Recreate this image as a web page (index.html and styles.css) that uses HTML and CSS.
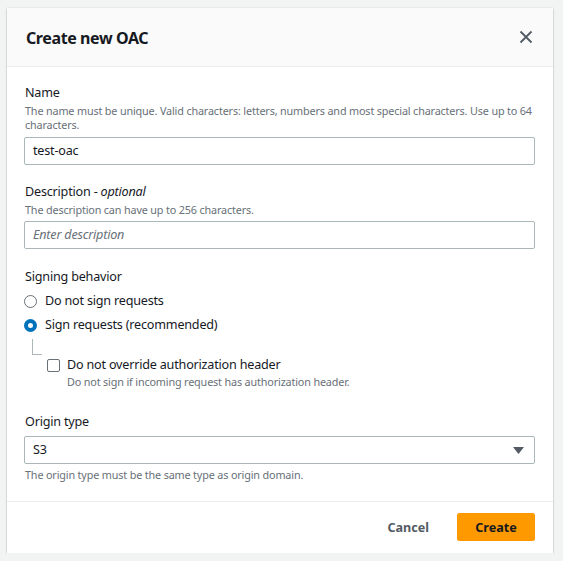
FILE: index.html
```html
<!DOCTYPE html>
<html>
<head>
<meta charset="utf-8">
<link rel="stylesheet" href="styles.css">
</head>
<body>
<div class="modal">
  <div class="header">
    <h2 class="title">Create new OAC</h2>
    <svg class="close" width="14" height="14" viewBox="0 0 14 14"><path d="M1.5 1.5 L12.5 12.5 M12.5 1.5 L1.5 12.5" stroke="#545b64" stroke-width="1.8" fill="none"/></svg>
  </div>
  <div class="content">
    <div class="field">
      <div class="label">Name</div>
      <div class="desc">The name must be unique. Valid characters: letters, numbers and most special characters. Use up to 64 characters.</div>
      <div class="input">test-oac</div>
    </div>
    <div class="field f2">
      <div class="label">Description - <i>optional</i></div>
      <div class="desc">The description can have up to 256 characters.</div>
      <div class="input placeholder">Enter description</div>
    </div>
    <div class="field f3">
      <div class="label">Signing behavior</div>
      <div class="radio-row first"><span class="radio"></span><span>Do not sign requests</span></div>
      <div class="radio-row"><span class="radio checked"></span><span>Sign requests (recommended)</span></div>
      <div class="tree"></div>
      <div class="check-row"><span class="checkbox"></span><span>Do not override authorization header</span></div>
      <div class="desc check-desc">Do not sign if incoming request has authorization header.</div>
    </div>
    <div class="field f4">
      <div class="label">Origin type</div>
      <div class="input select"><span>S3</span><svg width="11" height="7" viewBox="0 0 11 7"><path d="M0 0 H11 L5.5 7 Z" fill="#545b64"/></svg></div>
      <div class="desc after">The origin type must be the same type as origin domain.</div>
    </div>
  </div>
  <div class="footer">
    <button class="btn cancel">Cancel</button>
    <button class="btn primary">Create</button>
  </div>
</div>
</body>
</html>
```
FILE: styles.css
```css
html, body {
  margin: 0;
  padding: 0;
  background: #f2f3f3;
  font-family: "Noto Sans", "Liberation Sans", sans-serif;
  color: #16191f;
}
.modal {
  margin: 8px 0 0 7px;
  width: 546px;
  background: #ffffff;
  box-shadow: 0 1px 2px rgba(0,0,0,0.25), 0 0 1px rgba(0,0,0,0.15);
}
.header {
  height: 58px;
  background: #fafafa;
  border-bottom: 1px solid #eaeded;
  display: flex;
  align-items: center;
  justify-content: space-between;
  padding: 0 20px 0 19px;
}
.title {
  margin: 0;
  font-size: 16px;
  font-weight: 700;
  line-height: 20px;
  padding-top: 2px;
  letter-spacing: -0.4px;
}
.close {
  display: block;
}
.content {
  padding: 16px 18px 19px 17px;
}
.label {
  font-size: 12.6px;
  line-height: 20px;
  padding-left: 1px;
  letter-spacing: -0.2px;
}
.label i {
  font-style: italic;
}
.desc {
  font-size: 10.8px;
  line-height: 14px;
  color: #687078;
  margin-top: 1px;
  padding-left: 1px;
  letter-spacing: -0.15px;
}
.input {
  margin-top: 5px;
  height: 26px;
  border: 1px solid #aab7b8;
  border-radius: 2px;
  font-size: 12.6px;
  line-height: 26px;
  padding: 0 8px;
  letter-spacing: -0.2px;
}
.placeholder {
  color: #687078;
  font-style: italic;
}
.f2 {
  margin-top: 17px;
}
.f2 .input {
  margin-top: 4px;
}
.f3 {
  margin-top: 18px;
}
.radio-row, .check-row {
  display: flex;
  align-items: center;
  font-size: 12.6px;
  line-height: 20px;
  margin-top: 4px;
  letter-spacing: -0.2px;
}
.radio {
  box-sizing: border-box;
  width: 13px;
  height: 13px;
  border-radius: 50%;
  border: 1px solid #687078;
  margin: 0 8px 0 0;
  flex: none;
}
.radio.checked {
  border: 4px solid #0073bb;
  background: #fff;
}
.tree {
  margin: 4px 0 0 8px;
  width: 9px;
  height: 15px;
  border-left: 1px solid #aab7b8;
  border-bottom: 1px solid #aab7b8;
}
.check-row {
  margin: 0 0 0 23px;
}
.checkbox {
  box-sizing: border-box;
  width: 13px;
  height: 13px;
  border: 1px solid #687078;
  border-radius: 2px;
  margin-right: 7px;
  flex: none;
}
.check-desc {
  margin: 0 0 0 42px;
}
.f4 {
  margin-top: 23px;
}
.select {
  margin-top: 4px;
  display: flex;
  align-items: center;
  justify-content: space-between;
  padding-right: 10px;
}
.select svg {
  display: block;
}
.after {
  margin-top: 4px;
}
.footer {
  border-top: 1px solid #eaeded;
  display: flex;
  justify-content: flex-end;
  align-items: center;
  gap: 9px;
  padding: 11px 18px 12px 18px;
}
.btn {
  font-family: "Noto Sans", "Liberation Sans", sans-serif;
  font-size: 12.6px;
  font-weight: 700;
  height: 28px;
  border-radius: 2px;
  border: 1px solid transparent;
  padding: 0 18px;
  background: transparent;
  color: #545b64;
}
.primary {
  width: 78px;
  background: #ff9900;
  border-color: #ff9900;
  color: #16191f;
  padding: 0;
}
```
